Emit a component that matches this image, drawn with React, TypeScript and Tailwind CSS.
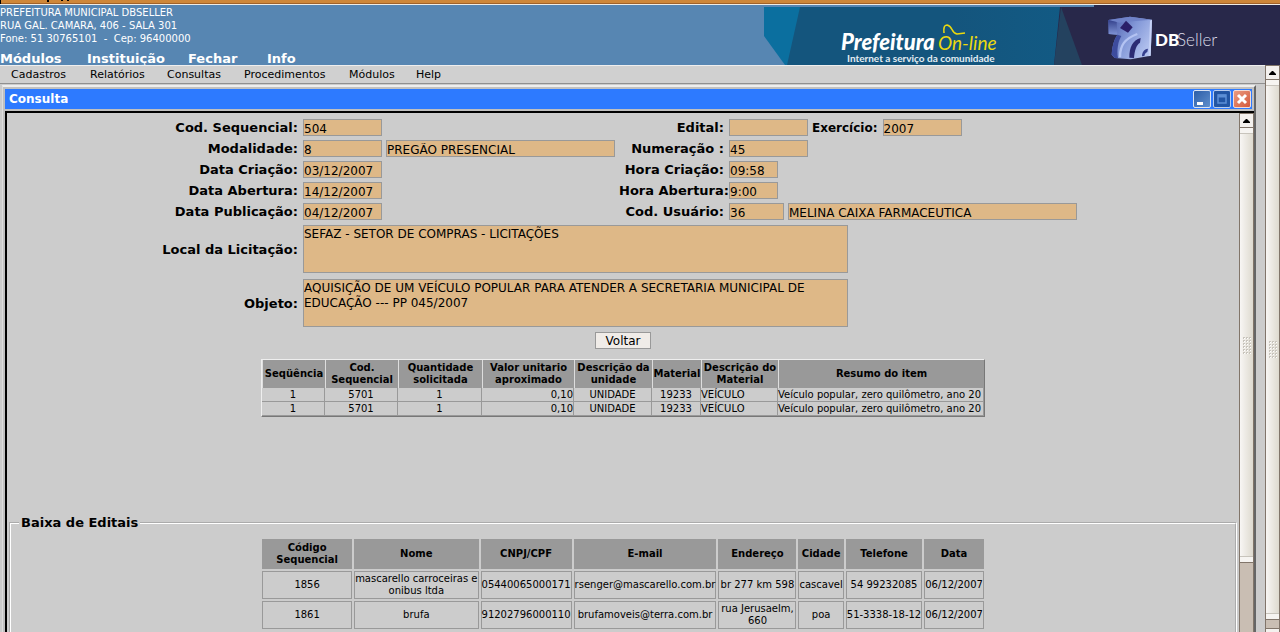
import React from "react";

const topLinks = [
  { label: "Módulos", width: "w-[87px]" },
  { label: "Instituição", width: "w-[101px]" },
  { label: "Fechar", width: "w-[79px]" },
  { label: "Info", width: "w-[60px]" },
];

const menu = [
  { label: "Cadastros", width: "w-[79px]" },
  { label: "Relatórios", width: "w-[77px]" },
  { label: "Consultas", width: "w-[77px]" },
  { label: "Procedimentos", width: "w-[105px]" },
  { label: "Módulos", width: "w-[67px]" },
  { label: "Help", width: "w-[50px]" },
];

function Banner() {
  return (
    <svg
      width="516"
      height="60"
      viewBox="0 0 516 60"
      className="block shrink-0"
      role="img"
      aria-label="Prefeitura On-line, DBSeller"
    >
      <defs>
        <linearGradient id="teal" x1="0" x2="1">
          <stop offset="0.6" stopColor="#14557d" />
          <stop offset="1" stopColor="#125a84" />
        </linearGradient>
        <linearGradient id="cube" x1="0" y1="0" x2="1" y2="0.6">
          <stop offset="0" stopColor="#4656a4" />
          <stop offset="0.55" stopColor="#8398d8" />
          <stop offset="1" stopColor="#b3c2ee" />
        </linearGradient>
        <linearGradient id="cubeSide" x1="0" y1="0" x2="0" y2="1">
          <stop offset="0" stopColor="#34418c" />
          <stop offset="1" stopColor="#7e93d4" />
        </linearGradient>
      </defs>
      <rect width="516" height="60" fill="#5786b2" />
      <path d="M0 2H36V60H21L0 31Z" fill="#0b6f9f" />
      <path d="M36 2H300V60H23Z" fill="url(#teal)" />
      <path d="M296 2H330V0H516V60H290Z" fill="#28284a" />
      <path d="M297 2L318 60H290Z" fill="#24425f" />
      <text x="77" y="45" fontSize="22" fontWeight="900" fontStyle="italic" fill="#fff" fontFamily="Lato, sans-serif">
        Prefeitura
      </text>
      <text x="174" y="45" fontSize="19" fontStyle="italic" fill="#ecd90e" fontFamily="Lato, sans-serif">
        On-line
      </text>
      <path
        d="M180 28Q179 20 183 20C189 21 187 28 193 29L201 28"
        fill="none"
        stroke="#ecd90e"
        strokeWidth="1.600"
      />
      <text x="83" y="57" fontSize="10" fontWeight="700" fill="#e3edf3" fontFamily="Lato, sans-serif">
        Internet a serviço da comunidade
      </text>
      <g transform="translate(336 3) scale(0.3333)">
        <path d="M25 36L90 26L156 35L152 143L92 154L44 150L35 140C36 115 42 95 52 80L26 78Z" fill="url(#cube)" />
        <path d="M25 36L90 26L156 35L98 40L58 44Z" fill="#6f82c8" />
        <path d="M25 36L50 42L52 80L26 78Z" fill="url(#cubeSide)" />
        <path d="M35 140C36 115 42 95 52 80L64 84C54 100 50 125 54 151L44 150Z" fill="#3d4c9e" />
        <path d="M78 38L98 58L84 74L60 60Z" fill="#2b1f69" />
        <path d="M60 148C60 112 74 92 112 78" fill="none" stroke="#b4c3f2" strokeWidth="7" />
        <path d="M88 149C88 118 98 96 122 90L120 104C108 112 104 128 102 150Z" fill="#2c2c74" />
        <path d="M126 145C126 132 132 124 144 122L142 132C136 134 134 140 133 144Z" fill="#36408e" />
        <path d="M150 38L156 35L152 143L146 145Z" fill="#c6d2f6" />
      </g>
      <text x="391" y="41" fontSize="17" fontWeight="900" fill="#fff" fontFamily="Lato, sans-serif">
        DB
      </text>
      <text x="413" y="41" fontSize="17" fontWeight="300" fill="#dcdce8" fontFamily="Lato, sans-serif">
        Seller
      </text>
    </svg>
  );
}

function Arrow() {
  return (
    <svg width="7" height="4" viewBox="0 0 7 4" aria-hidden="true">
      <path d="M3 0H4L7 3V4H0V3Z" fill="#000" />
    </svg>
  );
}

function Grip() {
  return (
    <div className="grid grid-cols-3 gap-px">
      {Array.from({ length: 18 }, (_, i) => (
        <span key={i} className="size-[2px] border-t border-l border-[#c8c4bc] bg-white" />
      ))}
    </div>
  );
}

function Scrollbar({ tail, footer }: { tail: string; footer?: boolean }) {
  return (
    <div className="flex w-[15px] shrink-0 flex-col border-x border-[#81756a] bg-[#c9beb3]">
      <button
        type="button"
        aria-label="Rolar para cima"
        className="flex h-[15px] shrink-0 items-center justify-center border-y border-[#81756a] bg-[#f4f1ee]"
      >
        <Arrow />
      </button>
      <div className="flex flex-1 flex-col bg-linear-to-r from-[#f8f6f4] to-[#dedacf]">
        <div className="h-[6px] border-b border-[#c8c4bc] bg-[#f6f4f1]" />
        <div className="flex flex-1 items-center justify-center">
          <Grip />
        </div>
        <div className="h-[6px] border-t border-[#c8c4bc] bg-[#f6f4f1]" />
      </div>
      <div className={`${tail} shrink-0 border-t border-[#81756a]`} />
      {footer && <div className="h-[4px] shrink-0 border-t border-[#81756a] bg-[#f4f1ee]" />}
    </div>
  );
}

function Field({ id, value, width, label }: { id: string; value: string; width: string; label?: string }) {
  return (
    <input
      id={id}
      aria-label={label}
      readOnly
      defaultValue={value}
      className={`${width} h-[17px] rounded-none border border-[#999] bg-[#deb887] pt-[2px] text-[12px] leading-[13px] outline-none`}
    />
  );
}

function Label({ htmlFor, children, flush }: { htmlFor: string; children: string; flush?: boolean }) {
  return (
    <label
      htmlFor={htmlFor}
      className={`${flush ? "" : "pr-[5px]"} justify-self-end text-[13px] leading-[17px] font-bold whitespace-nowrap`}
    >
      {children}
    </label>
  );
}

function Area({ id, value }: { id: string; value: string }) {
  return (
    <textarea
      id={id}
      readOnly
      defaultValue={value}
      className="col-span-3 block h-12 w-[545px] resize-none rounded-none border border-[#999] bg-[#deb887] pt-px text-[12px] leading-[15px] outline-none"
    />
  );
}

const itemHeads = [
  { label: "Seqüência", width: "w-[63px]" },
  { label: "Cod. Sequencial", width: "w-[73px]" },
  { label: "Quantidade solicitada", width: "w-[84px]" },
  { label: "Valor unitario aproximado", width: "w-[92px]" },
  { label: "Descrição da unidade", width: "w-[78px]" },
  { label: "Material", width: "w-[49px]" },
  { label: "Descrição do Material", width: "w-[77px]" },
  { label: "Resumo do item", width: "w-[206px]" },
];

const items = [
  ["1", "5701", "1", "0,10", "UNIDADE", "19233", "VEÍCULO", "Veículo popular, zero quilômetro, ano 20"],
  ["1", "5701", "1", "0,10", "UNIDADE", "19233", "VEÍCULO", "Veículo popular, zero quilômetro, ano 20"],
];

const itemAlign = [
  "text-center",
  "text-center",
  "text-center",
  "text-right",
  "text-center",
  "text-center",
  "text-left",
  "text-left",
];

const bidHeads = [
  { label: "Código Sequencial", width: "w-[90px]" },
  { label: "Nome", width: "w-[124px]" },
  { label: "CNPJ/CPF", width: "w-[88px]" },
  { label: "E-mail", width: "w-[141px]" },
  { label: "Endereço", width: "w-[78px]" },
  { label: "Cidade", width: "w-[45px]" },
  { label: "Telefone", width: "w-[76px]" },
  { label: "Data", width: "w-[58px]" },
];

const bids = [
  ["1856", "mascarello carroceiras e\nonibus ltda", "05440065000171", "rsenger@mascarello.com.br", "br 277 km 598", "cascavel", "54 99232085", "06/12/2007"],
  ["1861", "brufa", "91202796000110", "brufamoveis@terra.com.br", "rua Jerusaelm,\n660", "poa", "51-3338-18-12", "06/12/2007"],
];

function WindowButtons() {
  return (
    <div className="flex gap-[2px]">
      <button
        type="button"
        aria-label="Minimizar"
        className="size-[18px] rounded-xs border border-[#dbe4f2] bg-linear-to-br from-[#2c5ea8] to-[#5f8fcc]"
      >
        <svg viewBox="0 0 16 16" className="block size-4" aria-hidden="true">
          <path d="M3 11H9V14H3Z" fill="#fff" />
        </svg>
      </button>
      <button
        type="button"
        aria-label="Maximizar"
        className="size-[18px] rounded-xs border border-[#b9cdee] bg-[#2255a4]"
      >
        <svg viewBox="0 0 16 16" className="block size-4" aria-hidden="true">
          <path d="M4 4H12V12H4Z" fill="none" stroke="#5c8fd6" strokeWidth="1.500" />
          <path d="M4 5H12" stroke="#5c8fd6" strokeWidth="3" />
        </svg>
      </button>
      <button
        type="button"
        aria-label="Fechar"
        className="size-[18px] rounded-xs border border-[#f3dcd5] bg-linear-to-br from-[#e89a80] to-[#d4583a]"
      >
        <svg viewBox="0 0 16 16" className="block size-4" aria-hidden="true">
          <path d="M4 4L12 12M12 4L4 12" stroke="#fff" strokeWidth="3" />
        </svg>
      </button>
    </div>
  );
}

export default function App() {
  return (
    <div className="flex h-screen flex-col overflow-hidden bg-[#ccc] font-['DejaVu_Sans',sans-serif] text-black">
      <div className="flex h-[5px] shrink-0 border-b border-[#f0ece4] bg-[#ce8739]">
        <div className="w-px bg-black" />
        <div className="flex flex-1 gap-2 border-b border-[#a0622a] pl-[46px]">
          <span className="h-[2px] w-[2px] bg-black" />
          <span className="ml-1 h-px w-[2px] bg-black" />
          <span className="-ml-1 h-px w-[2px] bg-black" />
        </div>
      </div>

      <header className="flex shrink-0 justify-between bg-[#5786b2] text-white">
        <div className="flex h-[60px] flex-col justify-between pt-px">
          <address className="text-[10px] leading-[13px] whitespace-pre not-italic">
            {"PREFEITURA MUNICIPAL DBSELLER\nRUA GAL. CAMARA, 406 - SALA 301\nFone: 51 30765101  -  Cep: 96400000"}
          </address>
          <nav className="flex text-[13px] leading-[13px] font-bold">
            {topLinks.map((l) => (
              <a key={l.label} href="#" className={l.width}>
                {l.label}
              </a>
            ))}
          </nav>
        </div>
        <Banner />
      </header>

      <div className="flex min-h-0 flex-1">
        <div className="flex min-w-0 flex-1 flex-col">
          <nav className="flex h-[19px] shrink-0 border-t border-b border-t-[#eee] border-b-[#909090] bg-[#d0d0d0] pl-[11px] text-[11px] leading-[17px]">
            {menu.map((m) => (
              <a key={m.label} href="#" className={m.width}>
                {m.label}
              </a>
            ))}
          </nav>

          <main className="mt-px mr-[9px] ml-[2px] flex min-h-0 flex-1 flex-col border-t-2 border-r-2 border-l border-t-[#eee] border-r-[#666] border-l-[#ddd] bg-[#c0c0c0] pl-[2px]">
            <div className="mt-[2px] mr-[2px] flex h-5 shrink-0 items-center justify-between bg-[#2d7aff] pr-px pl-1">
              <h1 className="text-[12px] leading-5 font-bold text-white">Consulta</h1>
              <WindowButtons />
            </div>

            <div className="mt-[2px] flex min-h-0 flex-1 border-t-2 border-l-2 border-black bg-[#ccc]">
              <div className="flex min-w-0 flex-1 flex-col overflow-hidden pt-[6px]">
                <form className="flex flex-col items-center" onSubmit={(e) => e.preventDefault()}>
                  <div className="grid grid-cols-[136px_316px_110px_350px] items-center gap-y-1">
                    <Label htmlFor="seq">Cod. Sequencial:</Label>
                    <Field id="seq" value="504" width="w-[79px]" />
                    <Label htmlFor="edital">Edital:</Label>
                    <div className="flex gap-1">
                      <Field id="edital" value="" width="w-[79px]" />
                      <label htmlFor="exercicio" className="pr-px text-[12px] leading-[19px] font-bold whitespace-nowrap h-[17px]">
                        Exercício:
                      </label>
                      <Field id="exercicio" value="2007" width="w-[79px]" />
                    </div>

                    <Label htmlFor="modalidade">Modalidade:</Label>
                    <div className="flex gap-1">
                      <Field id="modalidade" value="8" width="w-[79px]" />
                      <Field
                        id="modalidade-nome"
                        label="Descrição da modalidade"
                        value="PREGÃO PRESENCIAL"
                        width="w-[229px]"
                      />
                    </div>
                    <Label htmlFor="numeracao">Numeração :</Label>
                    <Field id="numeracao" value="45" width="w-[79px]" />

                    <Label htmlFor="criacao">Data Criação:</Label>
                    <Field id="criacao" value="03/12/2007" width="w-[79px]" />
                    <Label htmlFor="hora-criacao">Hora Criação:</Label>
                    <Field id="hora-criacao" value="09:58" width="w-[49px]" />

                    <Label htmlFor="abertura">Data Abertura:</Label>
                    <Field id="abertura" value="14/12/2007" width="w-[79px]" />
                    <Label htmlFor="hora-abertura" flush>
                      Hora Abertura:
                    </Label>
                    <Field id="hora-abertura" value="9:00" width="w-[49px]" />

                    <Label htmlFor="publicacao">Data Publicação:</Label>
                    <Field id="publicacao" value="04/12/2007" width="w-[79px]" />
                    <Label htmlFor="usuario">Cod. Usuário:</Label>
                    <div className="flex gap-1">
                      <Field id="usuario" value="36" width="w-[55px]" />
                      <Field
                        id="usuario-nome"
                        label="Nome do usuário"
                        value="MELINA CAIXA FARMACEUTICA"
                        width="w-[289px]"
                      />
                    </div>
                  </div>

                  <div className="mt-[5px] grid grid-cols-[136px_316px_110px_350px] items-center gap-y-[6px]">
                    <Label htmlFor="local">Local da Licitação:</Label>
                    <Area id="local" value="SEFAZ - SETOR DE COMPRAS - LICITAÇÕES" />
                    <Label htmlFor="objeto">Objeto:</Label>
                    <Area
                      id="objeto"
                      value="AQUISIÇÃO DE UM VEÍCULO POPULAR PARA ATENDER A SECRETARIA MUNICIPAL DE EDUCAÇÃO --- PP 045/2007"
                    />
                  </div>

                  <button
                    type="button"
                    className="mt-[5px] h-[17px] w-14 border border-[#999] bg-[#f0ece8] pt-px text-[12px] leading-[15px]"
                  >
                    Voltar
                  </button>
                </form>

                <table className="mx-auto mt-[10px] w-[724px] shrink-0 table-fixed border-separate border-spacing-0 border border-t-[#eee] border-r-[#777] border-b-[#777] border-l-[#eee] text-[10px] leading-[12px]">
                  <thead>
                    <tr className="h-7 bg-[#999]">
                      {itemHeads.map((h) => (
                        <th key={h.label} scope="col" className={`${h.width} border-l border-[#ddd] p-0 font-bold`}>
                          {h.label}
                        </th>
                      ))}
                    </tr>
                  </thead>
                  <tbody>
                    {items.map((row, r) => (
                      <tr key={r} className="h-[14px]">
                        {row.map((cell, c) => (
                          <td
                            key={c}
                            className={`${itemAlign[c]} border-r border-b border-[#999] p-0 whitespace-nowrap`}
                          >
                            {cell}
                          </td>
                        ))}
                      </tr>
                    ))}
                  </tbody>
                </table>

                <fieldset className="mx-[2px] mt-[98px] flex min-h-[140px] flex-1 items-start justify-center border-2 border-white [border-style:groove]">
                  <legend className="ml-2 px-[2px] text-[13px] leading-4 font-bold">Baixa de Editais</legend>
                  <table className="mx-auto mt-[6px] border-separate border-spacing-[2px] text-center text-[10px] leading-[12px]">
                    <thead>
                      <tr className="h-[30px]">
                        {bidHeads.map((h) => (
                          <th key={h.label} scope="col" className={`${h.width} bg-[#999] p-0 font-bold`}>
                            {h.label.replace(" ", "\n")}
                          </th>
                        ))}
                      </tr>
                    </thead>
                    <tbody>
                      {bids.map((row) => (
                        <tr key={row[0]} className="h-7">
                          {row.map((cell, c) => (
                            <td key={c} className="border border-[#999] p-0 whitespace-pre">
                              {cell}
                            </td>
                          ))}
                        </tr>
                      ))}
                    </tbody>
                  </table>
                </fieldset>
              </div>
              <Scrollbar tail="h-[70px]" />
            </div>
          </main>
        </div>
        <Scrollbar tail="h-[9px]" footer />
      </div>
    </div>
  );
}
